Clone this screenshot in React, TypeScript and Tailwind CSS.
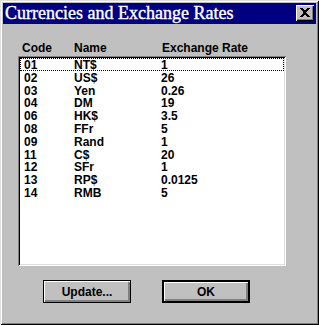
import React from 'react';

const rows = [
  { code: '01', name: 'NT$', rate: '1' },
  { code: '02', name: 'US$', rate: '26' },
  { code: '03', name: 'Yen', rate: '0.26' },
  { code: '04', name: 'DM', rate: '19' },
  { code: '06', name: 'HK$', rate: '3.5' },
  { code: '08', name: 'FFr', rate: '5' },
  { code: '09', name: 'Rand', rate: '1' },
  { code: '11', name: 'C$', rate: '20' },
  { code: '12', name: 'SFr', rate: '1' },
  { code: '13', name: 'RP$', rate: '0.0125' },
  { code: '14', name: 'RMB', rate: '5' },
];

const sans = "font-['Liberation_Sans',Arial,sans-serif] font-bold text-[12px] text-black";

export default function App() {
  return (
    <div className="w-[319px] h-[325px] bg-[#c0c0c0] p-[3px] flex flex-col shadow-[inset_1px_1px_#dfdfdf,inset_-1px_-1px_#000,inset_2px_2px_#fff,inset_-2px_-2px_#808080]">
      {/* Title bar */}
      <div className="h-[21px] bg-[#000080] flex items-start justify-between pl-[2px] pr-[2px]">
        <span className="font-['Liberation_Serif','Times_New_Roman',serif] text-[18px] leading-[20px] text-white [-webkit-text-stroke:0.4px_white]">
          Currencies and Exchange Rates
        </span>
        <button className="mt-[2px] w-[18px] h-[16px] bg-[#c0c0c0] flex items-center justify-center shadow-[inset_1px_1px_#fff,inset_-1px_-1px_#000,inset_-2px_-2px_#808080]">
          <svg width="10" height="9" viewBox="0 0 10 9" className="mb-[1px]" shapeRendering="crispEdges">
            <path
              d="M0 0h3l2 3 2-3h3L6.5 4.5 10 9H7L5 6 3 9H0l3.5-4.5z"
              fill="#000"
            />
          </svg>
        </button>
      </div>

      {/* Column headings */}
      <div className={`mt-[17px] ml-[19px] flex h-[14px] leading-[14px] ${sans}`}>
        <span className="w-[52px]">Code</span>
        <span className="w-[88px]">Name</span>
        <span>Exchange Rate</span>
      </div>

      {/* List box */}
      <div className="mt-[1px] ml-[15px] w-[268px] h-[210px] bg-white p-[2px] shadow-[inset_1px_1px_#808080,inset_-1px_-1px_#fff,inset_2px_2px_#000,inset_-2px_-2px_#dfdfdf]">
        {rows.map((r, i) => (
          <div
            key={r.code}
            className={`flex h-[12.8px] leading-[12.8px] pl-[3px] border ${i === 0 ? 'border-dotted border-black' : 'border-transparent'} ${sans}`}
          >
            <span className="w-[50px]">{r.code}</span>
            <span className="w-[87px]">{r.name}</span>
            <span>{r.rate}</span>
          </div>
        ))}
      </div>

      {/* Buttons */}
      <div className="mt-[14px] ml-[40px] flex gap-[31px]">
        <button className={`w-[88px] h-[23px] bg-[#c0c0c0] border border-black shadow-[inset_1px_1px_#fff,inset_-2px_-2px_#808080] ${sans}`}>
          Update...
        </button>
        <button className={`w-[88px] h-[23px] bg-[#c0c0c0] border-2 border-black shadow-[inset_1px_1px_#fff,inset_-2px_-2px_#808080] ${sans}`}>
          OK
        </button>
      </div>
    </div>
  );
}
